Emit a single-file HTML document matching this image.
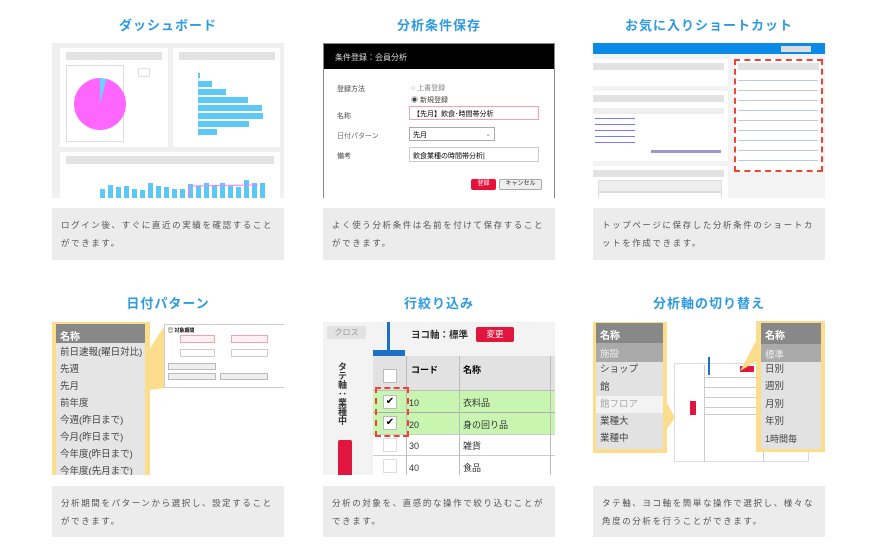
<!DOCTYPE html>
<html><head><meta charset="utf-8"><style>
*{margin:0;padding:0;box-sizing:border-box}
body{width:883px;height:554px;background:#fff;position:relative;overflow:hidden;font-family:"Liberation Sans","Noto Sans CJK JP",sans-serif}
.a{position:absolute}
.t{position:absolute;width:232px;text-align:center;color:#2e9be0;font-size:13px;font-weight:bold;letter-spacing:1px}
.cap{position:absolute;width:232px;background:#ececec;color:#555;font-size:8.5px;letter-spacing:1.6px;line-height:18px;padding:8px 9px}
.s{font-size:7px;color:#444}
.li{position:absolute;left:4px;font-size:9.5px;color:#444;line-height:12px;white-space:nowrap}
</style></head><body>
<div class="t" style="left:52px;top:15px">ダッシュボード</div>
<div class="t" style="left:323px;top:15px">分析条件保存</div>
<div class="t" style="left:593px;top:15px">お気に入りショートカット</div>
<div class="t" style="left:52px;top:293px">日付パターン</div>
<div class="t" style="left:323px;top:293px">行絞り込み</div>
<div class="t" style="left:593px;top:293px">分析軸の切り替え</div>

<!-- 1 dashboard -->
<div class="a" style="left:52px;top:43px;width:232px;height:155px;background:#f0f0f0;overflow:hidden">
 <div class="a" style="left:8px;top:5px;width:108px;height:99px;background:#fff">
  <div class="a" style="left:6px;top:4px;width:96px;height:8px;background:#e2e2e2"></div>
  <div class="a" style="left:6px;top:17px;width:58px;height:77px;border:1px solid #ddd"></div>
  <div class="a" style="left:14px;top:30px;width:52px;height:52px;border-radius:50%;background:conic-gradient(#6fd0f5 0 4%,#ff66ff 4% 100%)"></div>
  <div class="a" style="left:78px;top:20px;width:12px;height:9px;border:1px solid #ddd"></div>
 </div>
 <div class="a" style="left:121px;top:5px;width:107px;height:99px;background:#fff">
  <div class="a" style="left:6px;top:4px;width:96px;height:8px;background:#e2e2e2"></div>
  <div class="a" style="left:25px;top:24px;width:1px;height:64px;background:#ddd"></div>
  <div class="a" style="left:25px;top:25px;width:2px;height:5px;background:#5bc8f5"></div>
  <div class="a" style="left:25px;top:33px;width:14px;height:6px;background:#5bc8f5"></div>
  <div class="a" style="left:25px;top:41px;width:28px;height:6px;background:#5bc8f5"></div>
  <div class="a" style="left:25px;top:49px;width:50px;height:6px;background:#5bc8f5"></div>
  <div class="a" style="left:25px;top:57px;width:64px;height:6px;background:#5bc8f5"></div>
  <div class="a" style="left:25px;top:65px;width:65px;height:6px;background:#5bc8f5"></div>
  <div class="a" style="left:25px;top:73px;width:51px;height:6px;background:#5bc8f5"></div>
  <div class="a" style="left:25px;top:81px;width:19px;height:6px;background:#5bc8f5"></div>
 </div>
 <div class="a" style="left:8px;top:109px;width:220px;height:60px;background:#fff">
  <div class="a" style="left:6px;top:4px;width:208px;height:8px;background:#e2e2e2"></div>
  <svg class="a" style="left:0;top:14px" width="220" height="46">
   <g fill="#5bc8f5">
    <rect x="40" y="23" width="5" height="23"/><rect x="48" y="19" width="5" height="27"/><rect x="56" y="21" width="5" height="25"/><rect x="64" y="20" width="5" height="26"/><rect x="72" y="23" width="5" height="23"/><rect x="80" y="24" width="5" height="22"/><rect x="88" y="17" width="5" height="29"/><rect x="96" y="20" width="5" height="26"/><rect x="104" y="21" width="5" height="25"/><rect x="112" y="23" width="5" height="23"/><rect x="120" y="23" width="5" height="23"/><rect x="128" y="18" width="5" height="28"/><rect x="136" y="20" width="5" height="26"/><rect x="144" y="17" width="5" height="29"/><rect x="152" y="19" width="5" height="27"/><rect x="160" y="17" width="5" height="29"/><rect x="168" y="20" width="5" height="26"/><rect x="176" y="21" width="5" height="25"/><rect x="184" y="14" width="5" height="32"/><rect x="192" y="17" width="5" height="29"/><rect x="200" y="17" width="5" height="29"/>
   </g>
   <polyline points="127,46 130,20 198,19" fill="none" stroke="#f7f" stroke-width="1"/>
  </svg>
 </div>
</div>
<div class="cap" style="left:52px;top:208px;height:52px">ログイン後、すぐに直近の実績を確認することができます。</div>

<!-- 2 save -->
<div class="a" style="left:323px;top:43px;width:232px;height:155px;background:#fff;border:1px solid #888;border-bottom:none;overflow:hidden">
 <div class="a" style="left:0;top:0;width:232px;height:25px;background:#000;color:#ddd;font-size:8px;padding:8px 11px">条件登録：会員分析</div>
 <div class="a s" style="left:13px;top:40px">登録方法</div>
 <div class="a s" style="left:87px;top:39px;color:#888">○ 上書登録</div>
 <div class="a s" style="left:87px;top:51px">◉ 新規登録</div>
 <div class="a s" style="left:13px;top:67px">名称</div>
 <div class="a s" style="left:85px;top:62px;width:130px;height:14px;border:1px solid #f3a0b0;padding:2px 3px;color:#000">【先月】飲食･時間帯分析</div>
 <div class="a s" style="left:13px;top:87px;color:#666">日付パターン</div>
 <div class="a s" style="left:85px;top:83px;width:86px;height:14px;border:1px solid #aaa;padding:2px 3px;color:#000">先月<span style="float:right;color:#888">⌄</span></div>
 <div class="a s" style="left:13px;top:107px">備考</div>
 <div class="a s" style="left:85px;top:103px;width:130px;height:15px;border:1px solid #ccc;padding:3px 3px;color:#000">飲食業種の時間帯分析|</div>
 <div class="a" style="left:147px;top:135px;width:25px;height:11px;background:#e8113a;border-radius:2px;color:#fff;font-size:6px;text-align:center;line-height:11px">登録</div>
 <div class="a" style="left:175px;top:135px;width:43px;height:11px;background:#eee;border:1px solid #aaa;border-radius:2px;font-size:6px;text-align:center;line-height:9px;color:#333">キャンセル</div>
</div>
<div class="cap" style="left:323px;top:208px;height:52px">よく使う分析条件は名前を付けて保存することができます。</div>

<!-- 3 shortcut -->
<div class="a" style="left:593px;top:43px;width:232px;height:155px;background:#f3f3f3;overflow:hidden">
 <div class="a" style="left:0;top:0;width:232px;height:11px;background:#0a8ae8"></div>
 <div class="a" style="left:188px;top:3px;width:30px;height:6px;background:#ddd"></div>
 <div class="a" style="left:0;top:16px;width:135px;height:27px;background:#fff"><div class="a" style="left:0;top:4px;width:131px;height:7px;background:#e2e2e2"></div></div>
 <div class="a" style="left:0;top:48px;width:135px;height:70px;background:#fff">
  <div class="a" style="left:0;top:4px;width:131px;height:7px;background:#e2e2e2"></div>
  <div class="a" style="left:0;top:17px;width:131px;height:6px;background:#eee"></div>
  <div class="a" style="left:2px;top:25px;width:40px;height:28px;background:repeating-linear-gradient(#fff 0 2px,#77f 2px 3px,#fff 3px 6px)"></div>
  <div class="a" style="left:58px;top:59px;width:70px;height:3px;background:#99c"></div>
 </div>
 <div class="a" style="left:0;top:123px;width:135px;height:60px;background:#fff">
  <div class="a" style="left:0;top:4px;width:131px;height:7px;background:#e2e2e2"></div>
  <div class="a" style="left:5px;top:14px;width:124px;height:12px;background:#eee;border:1px solid #ddd"></div>
  <div class="a" style="left:5px;top:26px;width:124px;height:14px;border:1px solid #ddd"></div>
 </div>
 <div class="a" style="left:141px;top:16px;width:89px;height:113px;background:#fff;border:2px dashed #e43"></div>
 <div class="a" style="left:145px;top:20px;width:81px;height:7px;background:#e2e2e2"></div>
 <div class="a" style="left:145px;top:32px;width:80px;height:90px;background:repeating-linear-gradient(#fff 0 5px,#bcd 5px 6px,#fff 6px 10px)"></div>
</div>
<div class="cap" style="left:593px;top:208px;height:52px">トップページに保存した分析条件のショートカットを作成できます。</div>

<!-- 4 date pattern -->
<div class="a" style="left:52px;top:322px;width:232px;height:153px;background:#fff;overflow:hidden">
 <div class="a" style="left:0;top:0;width:98px;height:153px;background:#fcdd8c"></div>
 <svg class="a" style="left:0;top:0" width="232" height="153"><polygon points="97,28 113,3 113,66 97,68" fill="#fcdd8c"/></svg>
 <div class="a" style="left:4px;top:2px;width:89px;height:151px;background:#e5e5e5">
  <div class="a" style="left:0;top:0;width:89px;height:19px;background:#888;color:#fff;font-size:10px;padding:4px 4px;font-weight:bold">名称</div>
  <div class="li" style="top:23px">前日速報(曜日対比)</div>
  <div class="li" style="top:40px">先週</div>
  <div class="li" style="top:57px">先月</div>
  <div class="li" style="top:74px">前年度</div>
  <div class="li" style="top:91px">今週(昨日まで)</div>
  <div class="li" style="top:108px">今月(昨日まで)</div>
  <div class="li" style="top:125px">今年度(昨日まで)</div>
  <div class="li" style="top:142px">今年度(先月まで)</div>
 </div>
 <div class="a" style="left:112px;top:2px;width:120px;height:64px;background:#fff;border:1px solid #ccc;border-right:none"></div>
 <div class="a" style="left:116px;top:5px;font-size:5px;font-weight:bold">▤ 対象期間</div>
 <div class="a" style="left:128px;top:13px;width:35px;height:8px;border:1px solid #f3a0b0;background:#fff0f3"></div>
 <div class="a" style="left:179px;top:13px;width:37px;height:8px;border:1px solid #f3a0b0;background:#fff0f3"></div>
 <div class="a" style="left:128px;top:27px;width:35px;height:8px;border:1px solid #ccc"></div>
 <div class="a" style="left:179px;top:27px;width:37px;height:8px;border:1px solid #ccc"></div>
 <div class="a" style="left:116px;top:41px;width:48px;height:7px;background:#eee;border:1px solid #bbb"></div>
 <div class="a" style="left:116px;top:51px;width:48px;height:7px;background:#eee;border:1px solid #bbb"></div>
 <div class="a" style="left:168px;top:51px;width:48px;height:7px;background:#eee;border:1px solid #bbb"></div>
</div>
<div class="cap" style="left:52px;top:486px;height:51px">分析期間をパターンから選択し、設定することができます。</div>

<!-- 5 row filter -->
<div class="a" style="left:323px;top:322px;width:232px;height:153px;background:#f3f3f3;overflow:hidden">
 <div class="a" style="left:4px;top:4px;width:39px;height:13px;background:#e2e2e2;color:#999;font-size:8px;text-align:center;line-height:13px;border-radius:2px">クロス</div>
 <div class="a" style="left:88px;top:5px;font-size:9.5px;font-weight:bold;color:#333">ヨコ軸：標準</div>
 <div class="a" style="left:153px;top:5px;width:38px;height:15px;background:#e0163f;border-radius:2px;color:#fff;font-size:8.5px;text-align:center;line-height:15px">変更</div>
 <div class="a" style="left:64px;top:0;width:3px;height:28px;background:#1a72c8"></div>
 <div class="a" style="left:50px;top:28px;width:32px;height:6px;background:#1a72c8"></div>
 <div class="a" style="left:13px;top:40px;font-size:9px;font-weight:bold;color:#333;writing-mode:vertical-rl">タテ軸：業種中</div>
 <div class="a" style="left:15px;top:118px;width:14px;height:40px;background:#e0163f;border-radius:2px"></div>
 <div class="a" style="left:50px;top:34px;width:182px;height:119px;background:#fff"></div>
 <div class="a" style="left:50px;top:34px;width:182px;height:35px;background:#e2e2e2;border-bottom:1px solid #bbb"></div>
 <div class="a" style="left:50px;top:69px;width:182px;height:43px;background:#c8f5b0"></div>
 <div class="a" style="left:50px;top:90px;width:182px;height:1px;background:#aaa"></div>
 <div class="a" style="left:50px;top:112px;width:182px;height:1px;background:#ccc"></div>
 <div class="a" style="left:50px;top:133px;width:182px;height:1px;background:#ccc"></div>
 <div class="a" style="left:83px;top:34px;width:1px;height:119px;background:#bbb"></div>
 <div class="a" style="left:136px;top:34px;width:1px;height:119px;background:#bbb"></div>
 <div class="a" style="left:227px;top:34px;width:1px;height:119px;background:#bbb"></div>
 <div class="a" style="left:60px;top:47px;width:14px;height:14px;background:#fff;border:1px solid #bbb"></div>
 <div class="a" style="left:60px;top:73px;width:14px;height:14px;background:#fff;border:1px solid #bbb;font-size:10px;text-align:center;line-height:12px">✔</div>
 <div class="a" style="left:60px;top:94px;width:14px;height:14px;background:#fff;border:1px solid #bbb;font-size:10px;text-align:center;line-height:12px">✔</div>
 <div class="a" style="left:60px;top:116px;width:14px;height:14px;background:#fff;border:1px solid #ddd"></div>
 <div class="a" style="left:60px;top:137px;width:14px;height:14px;background:#fff;border:1px solid #ddd"></div>
 <div class="a" style="left:52px;top:65px;width:34px;height:50px;border:2px dashed #e43"></div>
 <div class="a" style="left:88px;top:41px;font-size:9px;font-weight:bold">コード</div>
 <div class="a" style="left:140px;top:41px;font-size:9px;font-weight:bold">名称</div>
 <div class="a" style="left:86px;top:71px;font-size:9px;color:#333;line-height:21.5px">10<br>20<br>30<br>40</div>
 <div class="a" style="left:140px;top:71px;font-size:9px;color:#333;line-height:21.5px">衣料品<br>身の回り品<br>雑貨<br>食品</div>
</div>
<div class="cap" style="left:323px;top:486px;height:51px">分析の対象を、直感的な操作で絞り込むことができます。</div>

<!-- 6 axis switch -->
<div class="a" style="left:593px;top:321px;width:232px;height:160px;background:#fff;overflow:hidden">
 <div class="a" style="left:81px;top:42px;width:135px;height:99px;background:#fff;border:1px solid #ddd"></div>
 <div class="a" style="left:111px;top:56px;width:60px;height:38px;border:1px solid #ccc;background:repeating-linear-gradient(#fff 0 9px,#ccc 9px 10px)"></div>
 <div class="a" style="left:111px;top:44px;width:1px;height:97px;background:#ccc"></div>
 <div class="a" style="left:170px;top:44px;width:1px;height:97px;background:#ccc"></div>
 <div class="a" style="left:115px;top:36px;width:2px;height:18px;background:#1a72c8"></div>
 <div class="a" style="left:147px;top:45px;width:14px;height:6px;background:#e0163f"></div>
 <div class="a" style="left:97px;top:80px;width:6px;height:14px;background:#e0163f"></div>
 <svg class="a" style="left:0;top:0" width="232" height="160"><polygon points="72,78 82,97 72,110" fill="#fcdd8c"/><polygon points="147,50 164,18 164,40" fill="#fcdd8c"/></svg>
 <div class="a" style="left:0;top:1px;width:74px;height:131px;background:#fcdd8c"></div>
 <div class="a" style="left:3px;top:2px;width:67px;height:126px;background:#e2e2e2">
  <div class="a" style="left:0;top:0;width:67px;height:20px;background:#888;color:#fff;font-size:10px;padding:4px 4px;font-weight:bold">名称</div>
  <div class="a" style="left:0;top:20px;width:67px;height:19px;background:#aaa;color:#eee;font-size:9.5px;padding:3px 4px">施設</div>
  <div class="li" style="top:41px">ショップ</div>
  <div class="li" style="top:59px">館</div>
  <div class="a" style="left:0;top:73px;width:67px;height:17px;background:#f3f3f3"></div>
  <div class="li" style="top:76px;color:#aaa">館フロア</div>
  <div class="li" style="top:93px">業種大</div>
  <div class="li" style="top:110px">業種中</div>
 </div>
 <div class="a" style="left:163px;top:0;width:69px;height:131px;background:#fcdd8c"></div>
 <div class="a" style="left:168px;top:2px;width:60px;height:126px;background:#e2e2e2">
  <div class="a" style="left:0;top:0;width:60px;height:21px;background:#888;color:#fff;font-size:10px;padding:4px 4px;font-weight:bold">名称</div>
  <div class="a" style="left:0;top:21px;width:60px;height:18px;background:#aaa;color:#eee;font-size:9.5px;padding:3px 4px">標準</div>
  <div class="li" style="top:41px">日別</div>
  <div class="li" style="top:58px">週別</div>
  <div class="li" style="top:76px">月別</div>
  <div class="li" style="top:93px">年別</div>
  <div class="li" style="top:110px;font-size:9px">1時間毎</div>
 </div>
</div>
<div class="cap" style="left:593px;top:486px;height:51px">タテ軸、ヨコ軸を簡単な操作で選択し、様々な角度の分析を行うことができます。</div>
</body></html>
